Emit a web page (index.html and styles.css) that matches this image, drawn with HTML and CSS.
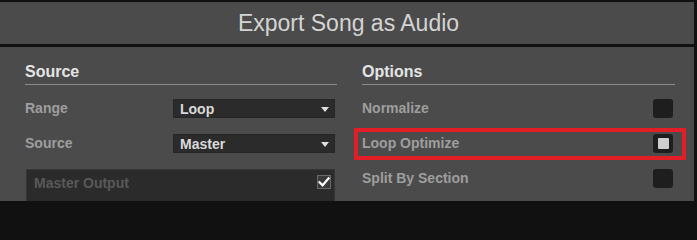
FILE: index.html
```html
<!DOCTYPE html>
<html>
<head>
<meta charset="utf-8">
<link rel="stylesheet" href="styles.css">
</head>
<body>
<div class="window">
  <div class="titlebar">Export Song as Audio</div>
  <div class="panel">
    <section class="col">
      <h2 class="heading">Source</h2>
      <div class="rows">
        <div class="row">
          <span class="label">Range</span>
          <div class="select"><span>Loop</span><i class="arrow"></i></div>
        </div>
        <div class="row">
          <span class="label">Source</span>
          <div class="select"><span>Master</span><i class="arrow"></i></div>
        </div>
        <div class="output">
          <span class="output-label">Master Output</span>
          <span class="tick">
            <svg width="14" height="14" viewBox="0 0 14 14"><polyline points="2.5,7.2 5.6,10.3 11.6,3.4" fill="none" stroke="#ffffff" stroke-width="2.2" stroke-linecap="square"/></svg>
          </span>
        </div>
      </div>
    </section>
    <section class="col">
      <h2 class="heading">Options</h2>
      <div class="rows">
        <div class="opt">
          <span class="label">Normalize</span>
          <span class="box"></span>
        </div>
        <div class="opt">
          <span class="label">Loop Optimize</span>
          <span class="box"><span class="on"></span></span>
          <span class="highlight"></span>
        </div>
        <div class="opt">
          <span class="label">Split By Section</span>
          <span class="box"></span>
        </div>
      </div>
    </section>
  </div>
</div>
</body>
</html>
```
FILE: styles.css
```css
html, body {
  margin: 0;
  padding: 0;
}
body {
  width: 697px;
  height: 201px;
  background: #111111;
  font-family: "Liberation Sans", Arial, sans-serif;
  overflow: hidden;
}
.window {
  padding: 2px 3px 0 0;
}
.titlebar {
  height: 42px;
  background: #4b4b4b;
  color: #d4d4d4;
  font-size: 23px;
  display: flex;
  align-items: center;
  justify-content: center;
  margin-bottom: 3px;
  padding-left: 3px;
}
.panel {
  background: #4b4b4b;
  height: 154px;
  box-sizing: border-box;
  padding: 15px 0 0 25px;
  display: grid;
  grid-template-columns: 312px 313px;
  column-gap: 25px;
  align-items: start;
}
.heading {
  margin: 0;
  font-size: 16px;
  line-height: 20px;
  font-weight: bold;
  color: #e4e4e4;
  padding-bottom: 2px;
  border-bottom: 1px solid #8c8c8c;
}
.rows {
  margin-top: 14px;
  display: flex;
  flex-direction: column;
  gap: 16px;
}
.row {
  display: grid;
  grid-template-columns: 148px 162px;
  align-items: center;
  height: 19px;
}
.label {
  font-size: 14px;
  font-weight: bold;
  color: #9e9e9e;
  line-height: 19px;
}
.select {
  height: 19px;
  box-sizing: border-box;
  background: #2b2b2b;
  border: 1px solid #262626;
  display: flex;
  align-items: center;
  justify-content: space-between;
  padding: 0 5px 0 6px;
  font-size: 14px;
  font-weight: bold;
  color: #dadada;
}
.arrow {
  width: 0;
  height: 0;
  border-left: 4px solid transparent;
  border-right: 4px solid transparent;
  border-top: 5px solid #dedede;
  margin-top: 1px;
}
.output {
  margin-left: 1px;
  width: 309px;
  height: 32px;
  box-sizing: border-box;
  background: #2b2b2b;
  border: 1px solid #363636;
  border-bottom: none;
  display: flex;
  align-items: flex-start;
  justify-content: space-between;
  padding: 5px 3px 0 7px;
}
.output-label {
  font-size: 14px;
  font-weight: bold;
  color: #595959;
  line-height: 14px;
  margin-top: 1px;
}
.tick {
  width: 14px;
  height: 14px;
  box-sizing: border-box;
  border: 1px solid #6a6a6a;
  background: #3a3a3a;
  display: flex;
}
.tick svg {
  display: block;
  margin: -1px;
}
.opt {
  position: relative;
  display: flex;
  align-items: center;
  justify-content: space-between;
  height: 19px;
  padding-right: 2px;
}
.box {
  width: 20px;
  height: 19px;
  border-radius: 3px;
  background: #1e1e1e;
  display: flex;
  align-items: center;
  justify-content: center;
}
.on {
  width: 11px;
  height: 11px;
  border-radius: 1px;
  background: #cfcfcf;
}
.highlight {
  position: absolute;
  top: -6px;
  left: -8px;
  right: -11px;
  bottom: -7px;
  border: 4px solid #e41e26;
}
```
